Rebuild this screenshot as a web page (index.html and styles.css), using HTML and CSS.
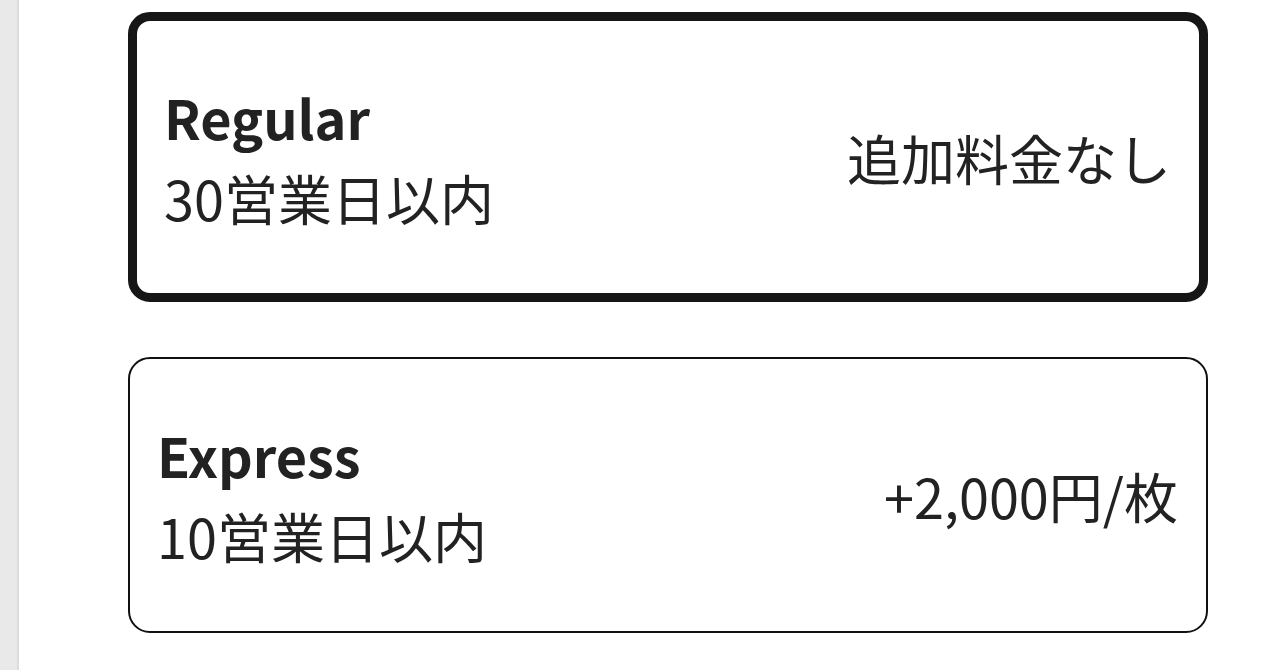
FILE: index.html
```html
<!DOCTYPE html>
<html lang="ja">
<head>
<meta charset="utf-8">
<title>配送オプション</title>
<link rel="stylesheet" href="styles.css">
</head>
<body>
<div class="page">
  <div class="side-strip"></div>
  <main class="options">
    <div class="option option-selected">
      <div class="option-info">
        <div class="option-title">Regular</div>
        <div class="option-sub">30営業日以内</div>
      </div>
      <div class="option-price">追加料金なし</div>
    </div>
    <div class="option">
      <div class="option-info">
        <div class="option-title">Express</div>
        <div class="option-sub">10営業日以内</div>
      </div>
      <div class="option-price">+2,000円/枚</div>
    </div>
  </main>
</div>
</body>
</html>
```
FILE: styles.css
```css
html, body {
  margin: 0;
  padding: 0;
  background: #ffffff;
}
body {
  font-family: "Noto Sans CJK JP", "Noto Sans", sans-serif;
  color: #222222;
}
.page {
  display: flex;
  min-height: 670px;
}
.side-strip {
  width: 17px;
  flex: none;
  background: #e9e9e9;
  border-right: 2px solid #dcdcdc;
}
.options {
  flex: 1;
  display: flex;
  flex-direction: column;
  gap: 55px;
  padding: 12px 72px 0 109px;
}
.option {
  display: flex;
  align-items: center;
  justify-content: space-between;
  padding: 55px 28px 55px 27px;
  border: 2px solid #111111;
  border-radius: 22px;
  background: #ffffff;
}
.option-selected {
  border: 9px solid #161616;
}
.option-title {
  font-size: 54px;
  line-height: 81px;
  font-weight: 700;
}
.option-sub {
  font-size: 54px;
  line-height: 81px;
  font-weight: 400;
}
.option-price {
  font-size: 54px;
  line-height: 81px;
  font-weight: 400;
}
```
